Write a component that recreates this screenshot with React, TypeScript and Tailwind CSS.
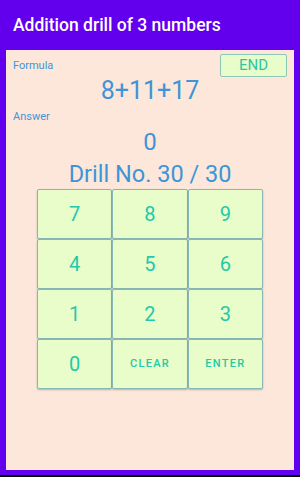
import React from "react";

const keys = ["7", "8", "9", "4", "5", "6", "1", "2", "3", "0", "CLEAR", "ENTER"];

export default function App() {
  return (
    <div
      className="w-[300px] h-[477px] bg-[#6200ee] flex flex-col overflow-hidden"
      style={{ fontFamily: "Roboto, 'Noto Sans', sans-serif" }}
    >
      <div className="h-[50px] px-[13px] flex items-center text-white text-[17.5px] font-medium">
        Addition drill of 3 numbers
      </div>
      <div className="mx-[6px] h-[420px] bg-[#fde7da] flex flex-col">
        <div className="flex justify-between items-start pt-[4px] pl-[7px] pr-[7px] h-[27px]">
          <span className="text-[11px] text-[#3d95d8] mt-[5px] leading-[14px]">Formula</span>
          <div className="w-[67px] h-[23px] border border-[#8cc8b8] rounded-[2px] bg-[#e8fdc9] text-[#2ac8a6] text-[15px] flex items-center justify-center">
            END
          </div>
        </div>
        <div className="h-[28px] leading-[28px] text-center text-[25px] text-[#3d95d8]">8+11+17</div>
        <div className="mt-[5px] pl-[7px] text-[11px] leading-[14px] text-[#3d95d8]">Answer</div>
        <div className="mt-[4px] h-[28px] leading-[28px] text-center text-[24px] text-[#3d95d8]">0</div>
        <div className="mt-[4px] h-[28px] leading-[28px] text-center text-[23.5px] text-[#3d95d8]">Drill No. 30 / 30</div>
        <div className="mt-[1px] ml-[31px] w-[226px] grid grid-cols-3">
          {keys.map((k) => (
            <div
              key={k}
              className={`h-[50px] border border-[#86b9b6] rounded-[2px] bg-[#e8fdc9] text-[#24c8aa] flex items-center justify-center shadow-[0_1px_2px_rgba(0,0,0,0.25)] ${
                k.length > 1 ? "text-[11px] font-medium tracking-[0.12em]" : "text-[20px]"
              }`}
            >
              {k}
            </div>
          ))}
        </div>
      </div>
      <div className="h-[5px]" />
      <div className="h-[2px] bg-black" />
    </div>
  );
}
